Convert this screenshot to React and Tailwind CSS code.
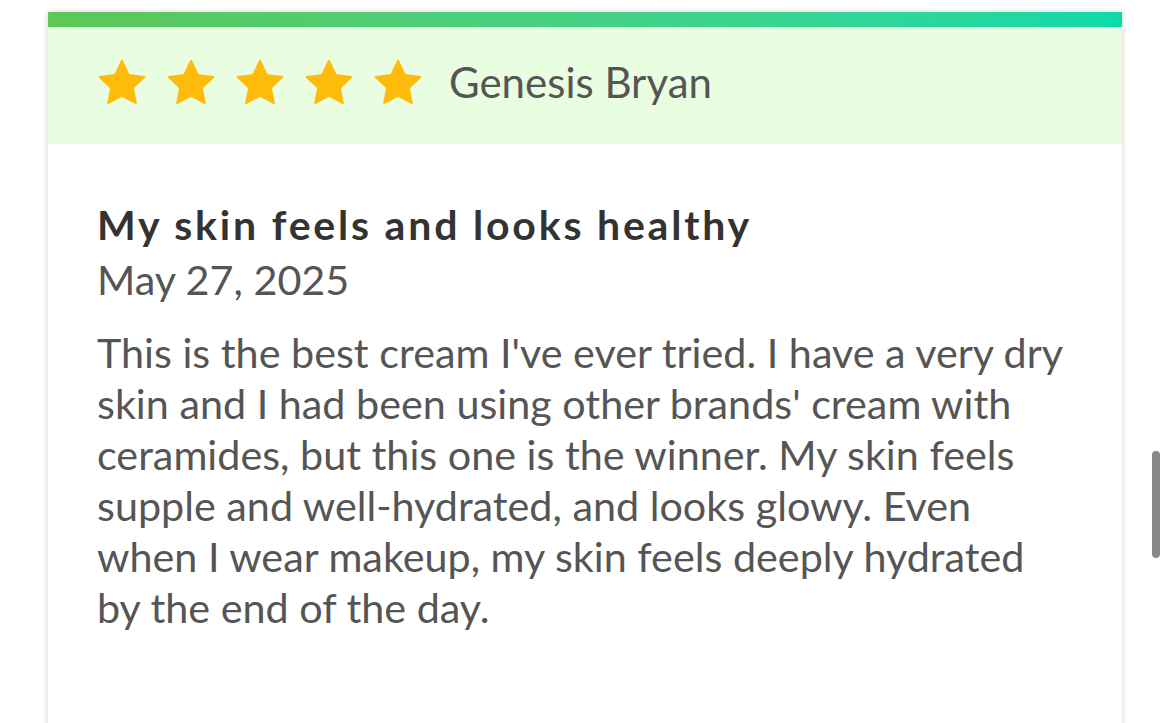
import React from 'react'

const Star = () => (
	<svg width="52" height="50" viewBox="0 0 24 23" className="shrink-0">
		<path
			d="M12 1.2l3.1 6.6 7.2.9-5.3 5 1.4 7.1L12 17.3l-6.4 3.5 1.4-7.1-5.3-5 7.2-.9z"
			fill="#ffbb0b"
			stroke="#ffbb0b"
			strokeWidth="0.9"
			strokeLinejoin="round"
		/>
	</svg>
)

export default function App() {
	return (
		<div className="w-[1170px] h-[723px] bg-white overflow-hidden relative" style={{ fontFamily: 'Lato, "Noto Sans", sans-serif' }}>
			<div className="pt-3 pl-12 w-[1122px]">
				<div className="bg-white shadow-[0_0_6px_rgba(0,0,0,0.18)] h-[760px]">
					{/* barra colorida no topo */}
					<div className="h-[15px] bg-gradient-to-r from-[#5dc757] to-[#0cdaa9]"></div>

					{/* cabeçalho com estrelas e nome */}
					<div className="h-[117px] bg-[#e9fde0] flex items-center pl-12 pb-[6px] gap-[17px]">
						<div className="flex gap-[17px]">
							<Star />
							<Star />
							<Star />
							<Star />
							<Star />
						</div>
						<span className="text-[42px] text-[#555] ml-[8px]">Genesis Bryan</span>
					</div>

					<div className="pl-[49px] pr-[49px] pt-[54px]">
						<h2 className="text-[41px] font-bold text-[#333] tracking-[2.8px] leading-[54px]">My skin feels and looks healthy</h2>
						<p className="text-[41.3px] text-[#555] leading-[54px]">May 27, 2025</p>
						<p className="text-[41.3px] text-[#555] leading-[51px] mt-[21px] w-[972px]">
							This is the best cream I've ever tried. I have a very dry skin and I had been using other brands' cream with ceramides, but this one is the winner. My skin feels supple and well-hydrated, and looks glowy. Even when I wear makeup, my skin feels deeply hydrated by the end of the day.
						</p>
					</div>
				</div>
			</div>

			{/* barra de rolagem */}
			<div className="absolute left-[1152px] top-[451px] w-[8px] h-[107px] rounded-full bg-[#888]"></div>
		</div>
	)
}
